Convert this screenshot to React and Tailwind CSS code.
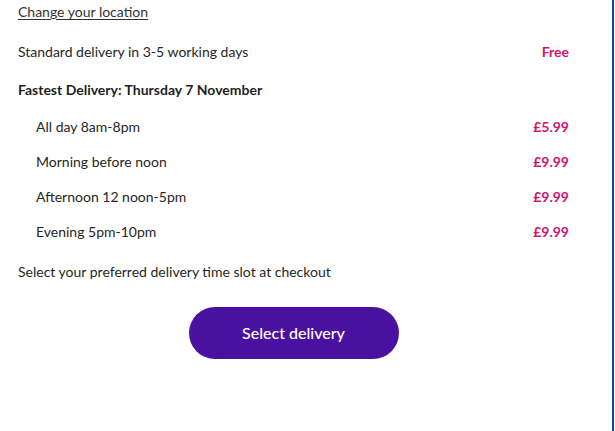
const slots = [
  { label: 'All day 8am-8pm', price: '£5.99' },
  { label: 'Morning before noon', price: '£9.99' },
  { label: 'Afternoon 12 noon-5pm', price: '£9.99' },
  { label: 'Evening 5pm-10pm', price: '£9.99' },
];

export default function App() {
  return (
    <div className="flex h-[431px] w-[615px] bg-white font-['Lato',sans-serif] text-[14px] text-[#262626]">
      <div className="flex-1 pl-[18px] pr-[43px]">
        <a href="#" className="block pt-[2px] leading-[20px] underline underline-offset-2 text-[#333]">
          Change your location
        </a>

        <div className="mt-[20px] flex items-center justify-between leading-[20px]">
          <span>Standard delivery in 3-5 working days</span>
          <span className="font-bold text-[#d4126f]">Free</span>
        </div>

        <p className="mt-[18px] leading-[20px] font-bold text-[#1f1f1f]">Fastest Delivery: Thursday 7 November</p>

        <div className="mt-[17px] flex flex-col gap-[15px] pl-[18px]">
          {slots.map((s) => (
            <div key={s.label} className="flex items-center justify-between leading-[20px]">
              <span>{s.label}</span>
              <span className="font-bold text-[#d4126f]">{s.price}</span>
            </div>
          ))}
        </div>

        <p className="mt-[20px] leading-[20px]">Select your preferred delivery time slot at checkout</p>

        <div className="mt-[25px] flex justify-center">
          <button className="h-[52px] w-[210px] rounded-full bg-[#4a11a0] text-[16px] font-medium text-white">
            Select delivery
          </button>
        </div>
      </div>
      <div className="w-[2px] bg-[#0d4a8c]" />
      <div className="w-[1px]" />
    </div>
  );
}
